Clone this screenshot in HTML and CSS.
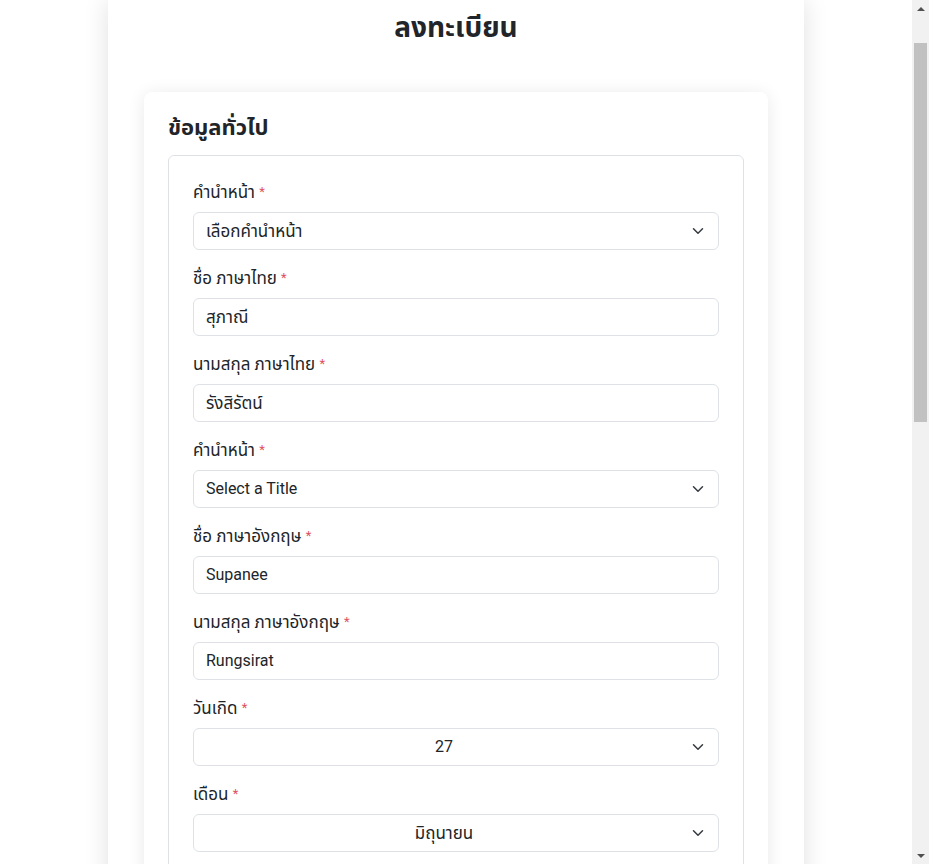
FILE: index.html
```html
<!DOCTYPE html>
<html lang="th">
<head>
<meta charset="utf-8">
<title>ลงทะเบียน</title>
<link rel="stylesheet" href="styles.css">
</head>
<body>
<main class="panel">
  <h1 class="page-title">ลงทะเบียน</h1>
  <section class="card">
    <h2 class="card-title">ข้อมูลทั่วไป</h2>
    <div class="group">
      <div class="field">
        <label class="label">คำนำหน้า <span class="req">*</span></label>
        <div class="control select"><span class="th">เลือกคำนำหน้า</span><svg class="chev" viewBox="0 0 16 16" width="16" height="12"><path d="M2 5l6 6 6-6" fill="none" stroke="#343a40" stroke-width="2" stroke-linecap="round" stroke-linejoin="round"/></svg></div>
      </div>
      <div class="field">
        <label class="label">ชื่อ ภาษาไทย <span class="req">*</span></label>
        <div class="control th">สุภาณี</div>
      </div>
      <div class="field">
        <label class="label">นามสกุล ภาษาไทย <span class="req">*</span></label>
        <div class="control th">รังสิรัตน์</div>
      </div>
      <div class="field">
        <label class="label">คำนำหน้า <span class="req">*</span></label>
        <div class="control select"><span>Select a Title</span><svg class="chev" viewBox="0 0 16 16" width="16" height="12"><path d="M2 5l6 6 6-6" fill="none" stroke="#343a40" stroke-width="2" stroke-linecap="round" stroke-linejoin="round"/></svg></div>
      </div>
      <div class="field">
        <label class="label">ชื่อ ภาษาอังกฤษ <span class="req">*</span></label>
        <div class="control">Supanee</div>
      </div>
      <div class="field">
        <label class="label">นามสกุล ภาษาอังกฤษ <span class="req">*</span></label>
        <div class="control">Rungsirat</div>
      </div>
      <div class="field">
        <label class="label">วันเกิด <span class="req">*</span></label>
        <div class="control select centered"><span>27</span><svg class="chev" viewBox="0 0 16 16" width="16" height="12"><path d="M2 5l6 6 6-6" fill="none" stroke="#343a40" stroke-width="2" stroke-linecap="round" stroke-linejoin="round"/></svg></div>
      </div>
      <div class="field">
        <label class="label">เดือน <span class="req">*</span></label>
        <div class="control select centered"><span class="th">มิถุนายน</span><svg class="chev" viewBox="0 0 16 16" width="16" height="12"><path d="M2 5l6 6 6-6" fill="none" stroke="#343a40" stroke-width="2" stroke-linecap="round" stroke-linejoin="round"/></svg></div>
      </div>
      <div class="field">
        <label class="label">ปี <span class="req">*</span></label>
        <div class="control select centered"><span>2535</span><svg class="chev" viewBox="0 0 16 16" width="16" height="12"><path d="M2 5l6 6 6-6" fill="none" stroke="#343a40" stroke-width="2" stroke-linecap="round" stroke-linejoin="round"/></svg></div>
      </div>
      <div class="field">
        <label class="label">เลขประจำตัวประชาชน <span class="req">*</span></label>
        <div class="control">1234567890123</div>
      </div>
      <div class="field">
        <label class="label">เบอร์โทรศัพท์ <span class="req">*</span></label>
        <div class="control">0812345678</div>
      </div>
      <div class="field">
        <label class="label">อีเมล <span class="req">*</span></label>
        <div class="control">supanee@example.com</div>
      </div>
    </div>
  </section>
  <section class="card">
    <h2 class="card-title">ที่อยู่</h2>
    <div class="group">
      <div class="field">
        <label class="label">บ้านเลขที่ <span class="req">*</span></label>
        <div class="control">99/1</div>
      </div>
      <div class="field">
        <label class="label">จังหวัด <span class="req">*</span></label>
        <div class="control th">กรุงเทพมหานคร</div>
      </div>
    </div>
  </section>
</main>
<div class="scrollbar" aria-hidden="true">
  <div class="sb-btn"><span class="tri up"></span></div>
  <div class="sb-track"><div class="sb-thumb"></div></div>
  <div class="sb-btn"><span class="tri down"></span></div>
</div>
</body>
</html>
```
FILE: styles.css
```css
html, body {
  margin: 0;
  padding: 0;
  background: #fff;
}
body {
  font-family: Roboto, "Noto Sans Thai", "Noto Sans", sans-serif;
  font-size: 16px;
  line-height: 1.5;
  color: #212529;
}
.panel {
  width: 624px;
  margin: 0 0 0 108px;
  padding: 13px 36px 48px;
  background: #fff;
  box-shadow: 0 0 24px rgba(0, 0, 0, 0.12);
}
.page-title {
  margin: 0 0 49px;
  font-size: 28px;
  line-height: 30px;
  font-weight: 700;
  text-align: center;
}
.card {
  background: #fff;
  border-radius: 8px;
  padding: 24px;
  box-shadow: 0 2px 18px rgba(0, 0, 0, 0.09);
  margin-bottom: 40px;
}
.card-title {
  margin: 0 0 15px;
  font-size: 22px;
  line-height: 24px;
  font-weight: 700;
}
.group {
  border: 1px solid #dee2e6;
  border-radius: 6px;
  padding: 24px 24px 8px;
}
.field {
  margin-bottom: 16px;
}
.label {
  display: block;
  height: 24px;
  margin-bottom: 8px;
  font-size: 17px;
  line-height: 24px;
  overflow: visible;
}
.req {
  color: #e0505e;
  font-size: 13px;
  line-height: 0;
  vertical-align: 2px;
}
.th {
  font-size: 17px;
  line-height: 24px;
}
.control {
  box-sizing: border-box;
  height: 38px;
  border: 1px solid #dee2e6;
  border-radius: 6px;
  padding: 6px 12px;
  background: #fff;
  line-height: 24px;
}
.select {
  display: flex;
  align-items: center;
  padding-right: 36px;
  position: relative;
}
.select span {
  flex: 1;
}
.centered span {
  text-align: center;
}
.chev {
  position: absolute;
  right: 12px;
  top: 12px;
}
.scrollbar {
  position: fixed;
  top: 0;
  right: 0;
  width: 17px;
  height: 100vh;
  background: #f1f1f1;
  display: flex;
  flex-direction: column;
}
.sb-btn {
  height: 17px;
  display: flex;
  align-items: center;
  justify-content: center;
}
.sb-track {
  flex: 1;
  padding-top: 26px;
}
.sb-thumb {
  width: 13px;
  height: 379px;
  margin-left: 2px;
  background: #c1c1c1;
}
.tri {
  width: 0;
  height: 0;
  border-left: 4px solid transparent;
  border-right: 4px solid transparent;
}
.tri.up {
  border-bottom: 4px solid #505050;
}
.tri.down {
  border-top: 4px solid #505050;
}
```
